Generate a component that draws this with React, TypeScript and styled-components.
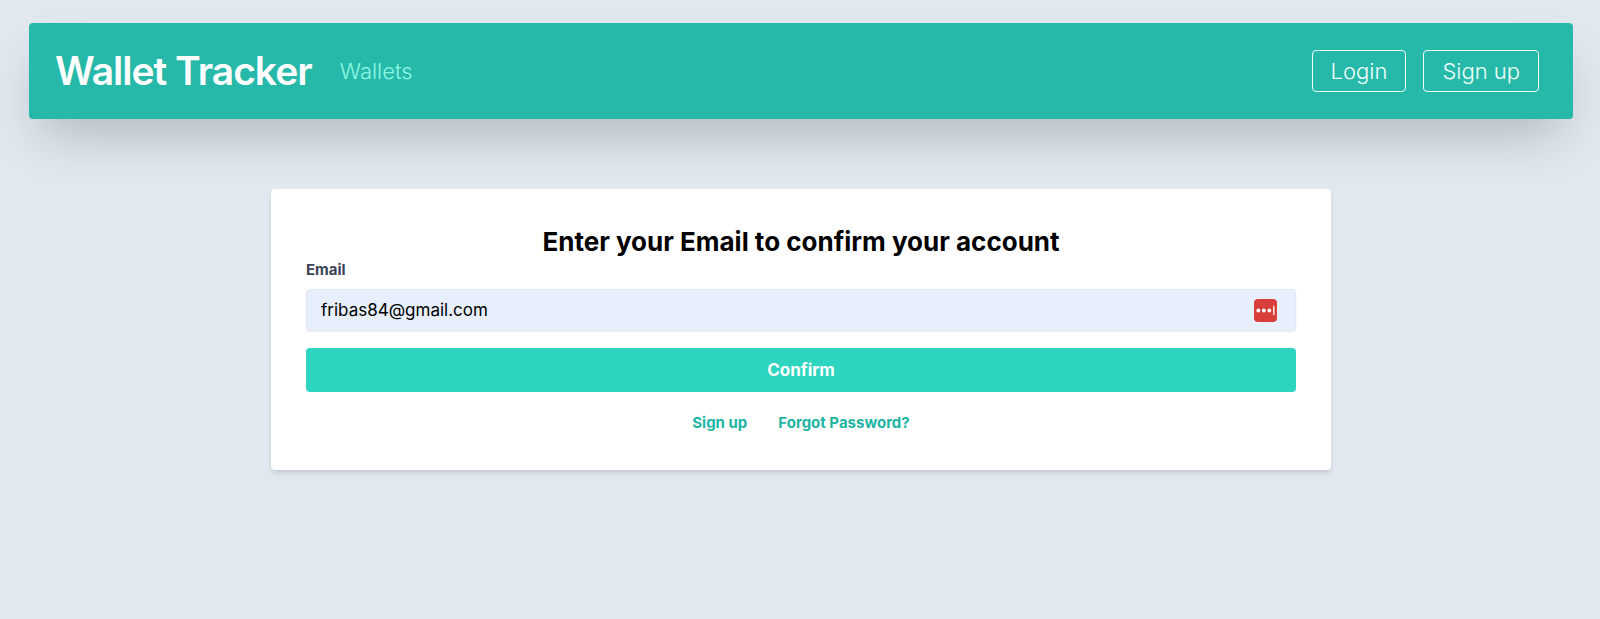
import React from 'react';
import styled, { createGlobalStyle } from 'styled-components';

const GlobalStyle = createGlobalStyle`
  *, *::before, *::after { box-sizing: border-box; }
  body {
    margin: 0;
    background: #e1e8f0;
    font-family: Inter, "Liberation Sans", sans-serif;
    line-height: 26px;
  }
`;

const Page = styled.div`
  padding: 23px 27px 40px 29px;
`;

const Navbar = styled.nav`
  display: flex;
  align-items: center;
  padding: 27px 34px 27px 26px;
  background: #26b8a8;
  border-radius: 4px;
  box-shadow: 0 26px 52px -12px rgba(0, 0, 0, 0.22);
`;

const Brand = styled.a`
  color: #fff;
  font-size: 39px;
  line-height: 42px;
  font-weight: 600;
  letter-spacing: -1px;
  text-decoration: none;
`;

const NavLink = styled.a`
  margin-left: 28px;
  color: #8df8e4;
  font-size: 22px;
  font-weight: 300;
  text-decoration: none;
`;

const Actions = styled.div`
  display: flex;
  gap: 17px;
  margin-left: auto;
`;

const OutlineButton = styled.button`
  height: 42px;
  padding: 0 18px;
  border: 1px solid #f0fffc;
  border-radius: 4px;
  background: transparent;
  color: #f0fffc;
  font: 300 22px/26px Inter, "Liberation Sans", sans-serif;
`;

const Card = styled.form`
  max-width: 1060px;
  margin: 70px auto 0;
  padding: 35px;
  background: #fff;
  border-radius: 4px;
  box-shadow: 0 4px 6px -1px rgba(0, 0, 0, 0.1), 0 2px 4px -1px rgba(0, 0, 0, 0.06);
`;

const Title = styled.h1`
  margin: 0;
  color: #000;
  font-size: 26px;
  line-height: 35px;
  font-weight: 700;
  text-align: center;
`;

const Label = styled.label`
  display: block;
  margin-bottom: 8px;
  color: #3b4256;
  font-size: 15px;
  line-height: 22px;
  font-weight: 700;
`;

const Field = styled.div`
  display: flex;
  align-items: center;
  height: 42px;
  margin-bottom: 17px;
  padding-right: 18px;
  border: 1px solid #e2e8f0;
  border-radius: 4px;
  background: #e7effd;
  box-shadow: 0 1px 2px rgba(0, 0, 0, 0.08);
`;

const Input = styled.input`
  flex: 1;
  min-width: 0;
  height: 38px;
  padding: 0 14px;
  border: 0;
  outline: 0;
  background: transparent;
  color: #000;
  font: 400 17px/22px Inter, "Liberation Sans", sans-serif;
`;

const SubmitButton = styled.button`
  display: block;
  width: 100%;
  height: 44px;
  border: 0;
  border-radius: 4px;
  background: #2dd4bf;
  color: #fff;
  font: 700 17px/26px Inter, "Liberation Sans", sans-serif;
`;

const Links = styled.div`
  display: flex;
  justify-content: center;
  gap: 31px;
  margin-top: 19px;
`;

const TextLink = styled.a`
  color: #20b5a3;
  font-size: 15px;
  line-height: 24px;
  font-weight: 700;
  text-decoration: none;
`;

function PasswordManagerIcon() {
  return (
    <svg width="23" height="23" viewBox="0 0 23 23" aria-hidden="true">
      <rect width="23" height="23" rx="4" fill="#d83f3b" />
      <circle cx="4.3" cy="11.5" r="1.9" fill="#fff" />
      <circle cx="9.8" cy="11.5" r="1.9" fill="#fff" />
      <circle cx="15.3" cy="11.5" r="1.9" fill="#fff" />
      <rect x="19.2" y="6.8" width="1.3" height="9.4" rx="0.6" fill="#fff" />
    </svg>
  );
}

export default function App() {
  return (
    <>
      <GlobalStyle />
      <Page>
        <Navbar>
          <Brand href="#home">Wallet Tracker</Brand>
          <NavLink href="#wallets">Wallets</NavLink>
          <Actions>
            <OutlineButton type="button">Login</OutlineButton>
            <OutlineButton type="button">Sign up</OutlineButton>
          </Actions>
        </Navbar>
        <Card onSubmit={(event) => event.preventDefault()}>
          <Title>Enter your Email to confirm your account</Title>
          <Label htmlFor="email">Email</Label>
          <Field>
            <Input id="email" type="email" defaultValue="fribas84@gmail.com" />
            <PasswordManagerIcon />
          </Field>
          <SubmitButton type="submit">Confirm</SubmitButton>
          <Links>
            <TextLink href="#signup">Sign up</TextLink>
            <TextLink href="#forgot">Forgot Password?</TextLink>
          </Links>
        </Card>
      </Page>
    </>
  );
}
